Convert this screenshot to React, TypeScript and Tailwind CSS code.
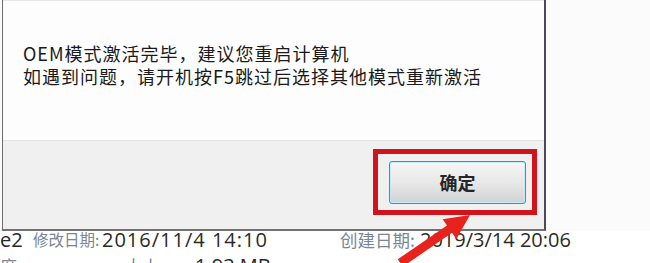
import React from 'react';

const Arrow = () => (
  <svg className="absolute left-0 top-0 pointer-events-none" width="650" height="263" viewBox="0 0 650 263">
    <polygon
      fill="#e8231d"
      points="470,215 456.3,238.9 452,232.8 402.8,266.7 397.8,259.3 447,225.4 442.7,219.3"
    />
  </svg>
);

const App = () => {
  return (
    <div className="relative w-[650px] h-[263px] overflow-hidden bg-[#fbfbfb] font-['Noto_Sans_CJK_SC','Noto_Sans',sans-serif]">
      <div className="ml-[2px] w-[544px] border-l border-r-2 border-b-2 border-l-[#6a6a6a] border-r-[#4a4b58] border-b-[#727272]">
        <div className="h-[140px] bg-[#fdfdfd] border-t border-t-[#e6e6e6] pl-[20px] pt-[41px] text-[18px] leading-[23px] tracking-[1px] text-[#1a1a1a]">
          <p>OEM模式激活完毕，建议您重启计算机</p>
          <p>如遇到问题，请开机按F5跳过后选择其他模式重新激活</p>
        </div>
        <div className="h-[89px] bg-[#f0f0f0] border-t border-t-[#e2e2e2] flex justify-end items-start pt-[8px] pr-[7px]">
          <div className="w-[164px] h-[66px] border-[5px] border-[#d1131c] pl-[11px] pt-[7px]">
            <button className="w-[137px] h-[43px] rounded-[3px] border border-[#3f8fb8] bg-gradient-to-b from-[#f6f6f6] via-[#e8e8e8] to-[#cfd3d6] shadow-[inset_0_0_0_1px_#c6eaf7] flex items-center justify-center text-[18px] font-bold text-[#262626]">
              确定
            </button>
          </div>
        </div>
      </div>
      <div className="bg-white h-[40px]">
        <div className="flex items-center h-[18px] whitespace-nowrap">
          <span className="w-[33px] text-[20px] text-[#262626] font-['Open_Sans',sans-serif]">e2</span>
          <span className="w-[69px] text-[15.5px] text-[#7a8696]">修改日期:</span>
          <span className="w-[238px] text-[20px] tracking-[1px] text-[#2a2a2a] font-['Open_Sans',sans-serif]">2016/11/4 14:10</span>
          <span className="w-[80px] text-[17.5px] text-[#7a8696]">创建日期:</span>
          <span className="text-[20px] text-[#2a2a2a] font-['Open_Sans',sans-serif]">2019/3/14 20:06</span>
        </div>
        <div className="flex items-center h-[18px] mt-[8px] whitespace-nowrap">
          <span className="w-[125px] text-[17px] text-[#7a8696]">度</span>
          <span className="w-[70px] text-[17px] text-[#7a8696]">大小:</span>
          <span className="text-[20px] text-[#2a2a2a] font-['Open_Sans',sans-serif]">1.93 MB</span>
        </div>
      </div>
      <Arrow />
    </div>
  );
};

export default App;
